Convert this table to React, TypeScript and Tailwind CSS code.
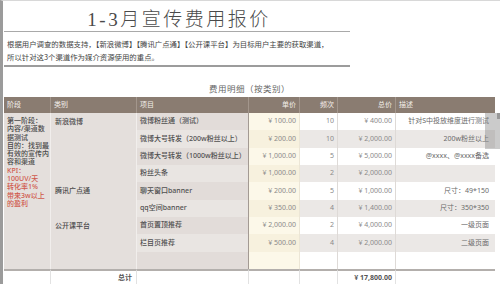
import React from "react";

type Row = { item: string; price: string; freq: string; total: string; desc: string };

const rows: Row[] = [
  { item: "微博粉丝通（测试）", price: "¥ 100.00", freq: "10", total: "¥ 400.00", desc: "针对S中投放维度进行测试" },
  { item: "微博大号转发（200w粉丝以上）", price: "¥ 200.00", freq: "10", total: "¥ 2,000.00", desc: "200w粉丝以上" },
  { item: "微博大号转发（1000w粉丝以上）", price: "¥ 1,000.00", freq: "5", total: "¥ 5,000.00", desc: "@xxxx、@xxxx备选" },
  { item: "粉丝头条", price: "¥ 1,000.00", freq: "2", total: "¥ 2,000.00", desc: "" },
  { item: "聊天窗口banner", price: "¥ 200.00", freq: "5", total: "¥ 1,000.00", desc: "尺寸：49*150" },
  { item: "qq空间banner", price: "¥ 350.00", freq: "4", total: "¥ 1,400.00", desc: "尺寸：350*350" },
  { item: "首页置顶推荐", price: "¥ 2,000.00", freq: "2", total: "¥ 4,000.00", desc: "一级页面" },
  { item: "栏目页推荐", price: "¥ 500.00", freq: "4", total: "¥ 2,000.00", desc: "二级页面" },
  { item: "", price: "", freq: "", total: "", desc: "" },
];

const categories: Record<number, { label: string; span: string }> = {
  0: { label: "新浪微博", span: "row-span-4" },
  4: { label: "腾讯广点通", span: "row-span-2" },
  6: { label: "公开课平台", span: "row-span-3" },
};

const headCell = "flex items-center px-[3px] text-[7px] text-[#f3eee9] border-r border-[#a3968c]";

export default function App() {
  return (
    <div className="relative w-[500px] h-[284px] overflow-hidden bg-white border-l-[3px] border-l-[#9b9b9b] border-t border-t-[#d8d8d8] font-['Noto_Sans','Noto_Sans_CJK_SC',sans-serif]">
      <div className="pl-[1px]">
        {/* Heading block */}
        <div className="w-[346px]">
          <div className="h-[31px] pt-[6px] pl-[4px] border-b border-[#a9a9a9] text-center text-[19px] leading-[25px] tracking-[2.5px] text-[#4a4a4a] font-light font-['Liberation_Serif','Noto_Sans_CJK_SC',serif]">
            1-3月宣传费用报价
          </div>
          <div className="pt-[5px] pb-[2px] pl-[3px] text-[7.4px] leading-[13px] text-[#444] border-b-2 border-[#9c9c9c] font-['Noto_Sans_CJK_SC',sans-serif]">
            <div>根据用户调查的数据支持，【新浪微博】【腾讯广点通】【公开课平台】为目标用户主要的获取渠道，</div>
            <div>所以针对这3个渠道作为媒介资源使用的重点。</div>
          </div>
        </div>

        {/* Table caption */}
        <div className="w-[491px] h-[30px] flex items-center justify-center pt-[12px] text-[8.5px] tracking-[0.5px] text-[#666] font-['Noto_Sans_CJK_SC',sans-serif]">
          费用明细（按类别）
        </div>

        {/* Table */}
        <div className="grid w-[491px] grid-cols-[47px_86px_112px_51px_38px_58px_99px] grid-rows-[16px_repeat(9,17.33px)_20px] font-['Noto_Sans','Noto_Sans_CJK_SC',sans-serif]">
          <div className={`${headCell} bg-[#8a7c71]`}>阶段</div>
          <div className={`${headCell} bg-[#8a7c71]`}>类别</div>
          <div className={`${headCell} bg-[#8a7c71]`}>项目</div>
          <div className={`${headCell} bg-[#8a7c71] justify-end`}>单价</div>
          <div className={`${headCell} bg-[#8a7c71] justify-end`}>频次</div>
          <div className={`${headCell} bg-[#8a7c71] justify-end`}>总价</div>
          <div className={`${headCell} bg-[#8a7c71] border-r-0`}>描述</div>

          {rows.map((r, i) => {
            const even = i % 2 === 1;
            const cat = categories[i];
            return (
              <React.Fragment key={i}>
                {i === 0 && (
                  <div className="row-span-9 bg-[#e4dfdc] border-r border-[#f1eeec] pt-[4px] pl-[3px] text-[7px] leading-[8.3px] font-medium whitespace-nowrap overflow-visible">
                    <div className="text-[#4a4a4a]">第一阶段：</div>
                    <div className="text-[#4a4a4a]">内容/渠道数</div>
                    <div className="text-[#4a4a4a]">据测试</div>
                    <div className="text-[#4a4a4a]">目的：找到最</div>
                    <div className="text-[#4a4a4a]">有效的宣传内</div>
                    <div className="text-[#4a4a4a]">容和渠道</div>
                    <div className="text-[#d0594c]">KPI：</div>
                    <div className="text-[#d0594c]">100UV/天</div>
                    <div className="text-[#d0594c]">转化率1%</div>
                    <div className="text-[#d0594c]">带来3w以上</div>
                    <div className="text-[#d0594c]">的盈利</div>
                  </div>
                )}
                {cat && (
                  <div className={`${cat.span} bg-[#e4dfdc] border-r border-[#f1eeec] pl-[4px] text-[7px] leading-[17.33px] text-[#4a4a4a] font-medium`}>
                    {cat.label}
                  </div>
                )}
                <div className={`flex items-center pl-[3px] text-[7px] text-[#4f4f4f] font-medium whitespace-nowrap border-r border-[#a39a93] ${even ? "bg-[#e9e5e2]" : "bg-[#e2dcd9]"}`}>
                  {r.item}
                </div>
                <div className={`flex items-center justify-end pr-[3px] text-[7px] text-[#8a8a8a] border-r border-[#ece6d6] ${even ? "bg-[#f7f1de]" : "bg-[#fcf8e9]"}`}>
                  {r.price}
                </div>
                <div className={`flex items-center justify-end pr-[3px] text-[7px] text-[#8a8a8a] border-r border-[#dedad7] ${even ? "bg-[#ebe8e6]" : "bg-white"}`}>
                  {r.freq}
                </div>
                <div className={`flex items-center justify-end pr-[3px] text-[7px] text-[#8a8a8a] border-r border-[#dedad7] ${even ? "bg-[#ebe8e6]" : "bg-white"}`}>
                  {r.total}
                </div>
                <div className={`flex items-center justify-end pr-[6px] text-[7px] text-[#6a6a6a] whitespace-nowrap ${even ? "bg-[#ebe8e6]" : "bg-white"}`}>
                  {r.desc}
                </div>
              </React.Fragment>
            );
          })}

          {/* Total row */}
          <div className="border-t-2 border-t-[#b3afac] border-r border-r-[#e2e2e2] bg-white" />
          <div className="border-t-2 border-t-[#b3afac] border-r border-r-[#e2e2e2] bg-white flex items-start pt-[2px] justify-end pr-[4px] text-[7px] font-bold text-[#555]">
            总计
          </div>
          <div className="border-t-2 border-t-[#b3afac] border-r border-r-[#e2e2e2] bg-white" />
          <div className="border-t-2 border-t-[#b3afac] border-r border-r-[#e2e2e2] bg-white" />
          <div className="border-t-2 border-t-[#b3afac] border-r border-r-[#e2e2e2] bg-white" />
          <div className="border-t-2 border-t-[#b3afac] border-r border-r-[#e2e2e2] bg-white flex items-start pt-[2px] justify-end pr-[3px] text-[7px] font-bold text-[#555]">
            ¥ 17,800.00
          </div>
          <div className="border-t-2 border-t-[#b3afac] bg-white" />
        </div>
      </div>

      {/* screenshot scrollbar artifact */}
      <div className="absolute left-[482px] top-[112px] w-[15px] h-[36px] bg-[#8c8c8c]/45" />
      <div className="absolute left-[494px] top-[112px] w-[3px] h-[6px] bg-[#777]/60" />
    </div>
  );
}
